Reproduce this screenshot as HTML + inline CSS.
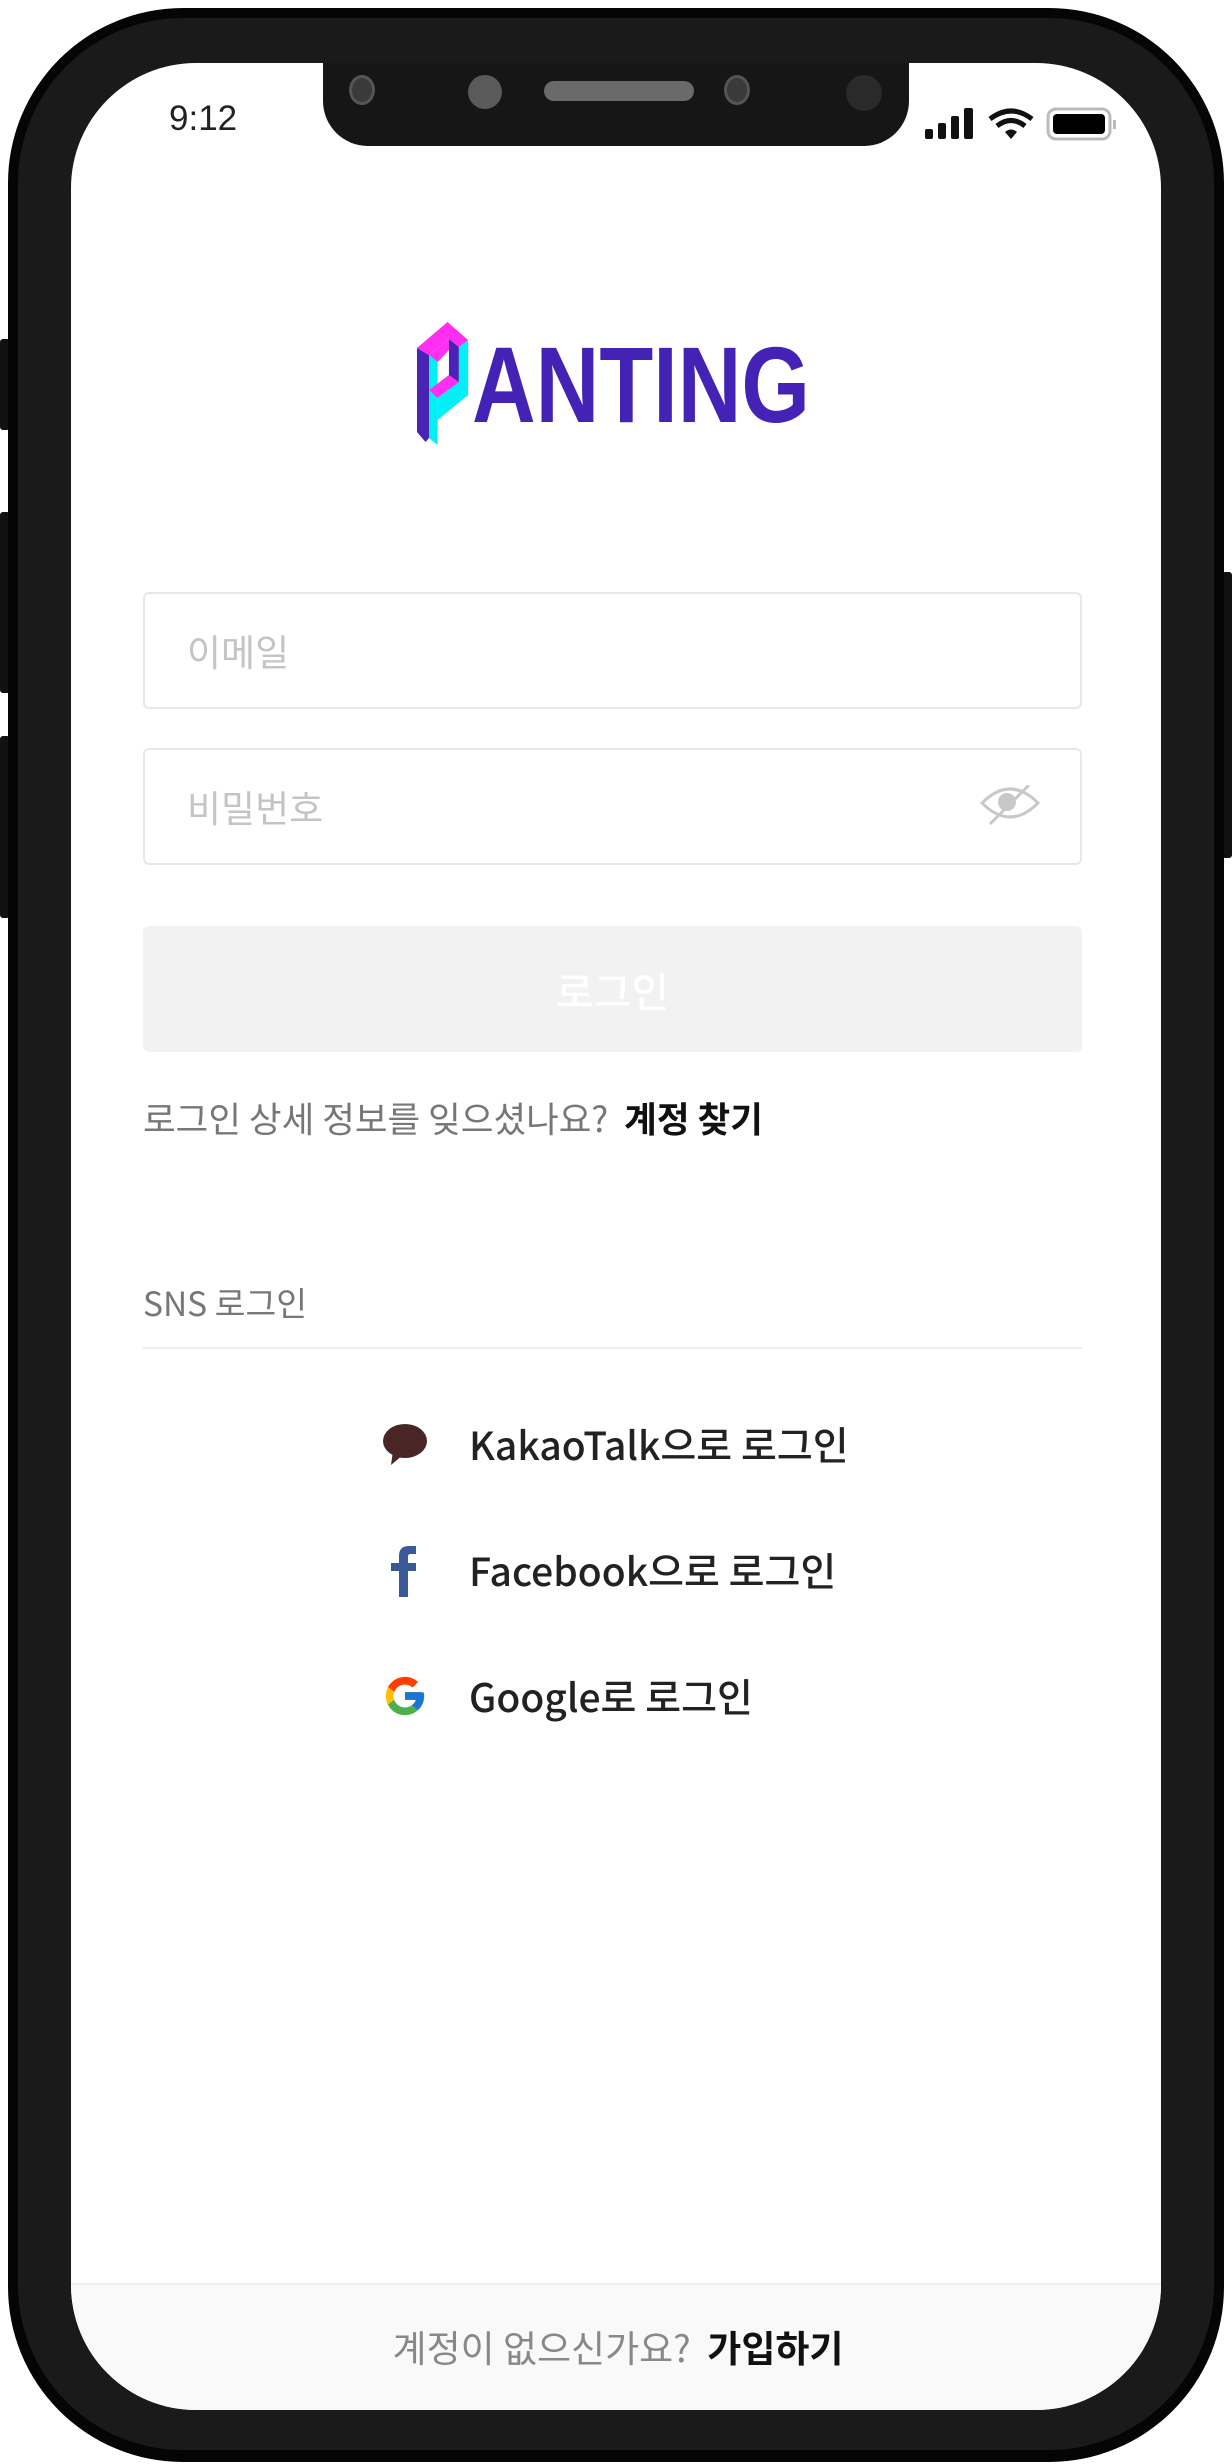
<!DOCTYPE html>
<html><head><meta charset="utf-8">
<style>
*{margin:0;padding:0;box-sizing:border-box}
html,body{width:1232px;height:2464px;background:#fff;overflow:hidden;font-family:"Noto Sans CJK KR","Liberation Sans",sans-serif}
.abs{position:absolute}
.phone{left:8px;top:8px;width:1216px;height:2454px;background:#050505;border-radius:175px}
.phone2{left:18px;top:18px;width:1196px;height:2432px;background:#1a1a1a;border-radius:165px}
.screen{left:71px;top:63px;width:1090px;height:2347px;background:#fff;border-radius:125px;overflow:hidden}
.btn{background:#111;border-radius:3px}
.input{position:absolute;left:72px;width:939px;height:117px;border:2px solid #e8e8e8;border-radius:6px}
.ph{position:absolute;left:42px;top:0;line-height:113px;font-size:37px;color:#c4c4c4}
.sns{position:absolute;left:398px;font-size:39px;color:#222;font-weight:500;line-height:50px;white-space:nowrap}
</style></head><body>
<div class="abs btn" style="left:0;top:339px;width:10px;height:91px"></div>
<div class="abs btn" style="left:0;top:512px;width:10px;height:181px"></div>
<div class="abs btn" style="left:0;top:736px;width:10px;height:182px"></div>
<div class="abs btn" style="left:1222px;top:572px;width:10px;height:286px"></div>
<div class="abs phone"></div>
<div class="abs phone2"></div>
<div class="abs screen">
  <div class="abs" style="left:98px;top:36px;font-size:35px;color:#222;font-family:'Liberation Sans',sans-serif">9:12</div>
  <svg class="abs" style="left:854px;top:44px" width="200" height="36" viewBox="0 0 200 36">
    <rect x="0" y="22" width="8" height="10" rx="2" fill="#111"/>
    <rect x="13" y="16" width="8" height="16" rx="2" fill="#111"/>
    <rect x="26" y="9" width="8" height="23" rx="2" fill="#111"/>
    <rect x="39" y="1" width="9" height="31" rx="2" fill="#111"/>
    <path d="M65 12 Q86 -4 107 12" stroke="#111" stroke-width="5" fill="none"/>
    <path d="M72 19 Q86 8 100 19" stroke="#111" stroke-width="5" fill="none"/>
    <path d="M80 25 L86 32 L92 25 Q86 20 80 25Z" fill="#111"/>
    <rect x="123" y="2" width="62" height="30" rx="8" fill="#fff" stroke="#bbb" stroke-width="3"/>
    <rect x="128" y="7" width="52" height="20" rx="4" fill="#000"/>
    <rect x="188" y="13" width="3" height="9" fill="#bbb"/>
  </svg>
  <div class="abs" style="left:252px;top:-30px;width:586px;height:113px;background:#161616;border-radius:0 0 45px 45px"></div>
  <div class="abs" style="left:278px;top:12px;width:26px;height:30px;border-radius:50%;background:#3a3a3a;border:3px solid #555"></div>
  <div class="abs" style="left:397px;top:12px;width:34px;height:34px;border-radius:50%;background:#5a5a5a"></div>
  <div class="abs" style="left:473px;top:18px;width:150px;height:20px;border-radius:10px;background:#6a6a6a"></div>
  <div class="abs" style="left:653px;top:12px;width:26px;height:30px;border-radius:50%;background:#3a3a3a;border:3px solid #555"></div>
  <div class="abs" style="left:775px;top:12px;width:36px;height:36px;border-radius:50%;background:#2a2a2a"></div>
  <svg class="abs" style="left:346px;top:259px" width="400" height="124" viewBox="417 322 400 124">
    <g transform="translate(417,0) scale(0.71,1) translate(-418,0)">
    <polygon points="418,348 435,355 435,438 430,442 418,432" fill="#4a22b5"/>
    <polygon points="435,355 447,362 447,445 435,438" fill="#00f0f5"/>
    <polygon points="418,348 461,322 490,340 477,347 463,339 435,355" fill="#ff2ef0"/>
    <polygon points="435,355 463,339 463,350 447,362" fill="#ff2ef0"/>
    <polygon points="463,339 477,347 477,382 463,390" fill="#4a22b5"/>
    <polygon points="477,347 490,340 490,395 477,402" fill="#00f0f5"/>
    <polygon points="435,390 463,375 477,382 447,398" fill="#ff2ef0"/>
    <polygon points="447,398 477,382 490,395 447,420" fill="#00f0f5"/>
    </g>
    <text x="472" y="422" font-family="Liberation Sans" font-weight="bold" font-size="108" fill="#4522b6" textLength="338" lengthAdjust="spacingAndGlyphs">ANTING</text>
  </svg>
  <div class="input" style="top:529px"><div class="ph">이메일</div></div>
  <div class="input" style="top:685px"><div class="ph">비밀번호</div>
    <svg class="abs" style="left:834px;top:35px" width="64" height="42" viewBox="976 785 64 42">
      <path d="M979 803 Q1007 775 1035 803 Q1007 831 979 803Z" fill="none" stroke="#c8c8c8" stroke-width="3"/>
      <circle cx="1004" cy="802" r="9" fill="#c8c8c8"/>
      <line x1="1026" y1="785" x2="987" y2="824" stroke="#c8c8c8" stroke-width="3"/>
    </svg>
  </div>
  <div class="abs" style="left:72px;top:863px;width:939px;height:126px;background:#f2f2f2;border-radius:6px;color:#fff;font-size:41px;text-align:center;line-height:126px;font-weight:500">로그인</div>
  <div class="abs" style="left:72px;top:1030px;font-size:35.5px;color:#777;line-height:50px;white-space:nowrap">로그인 상세 정보를 잊으셨나요?&nbsp; <span style="color:#111;font-weight:bold">계정 찾기</span></div>
  <div class="abs" style="left:72px;top:1214px;font-size:33.5px;color:#777;line-height:50px">SNS 로그인</div>
  <div class="abs" style="left:72px;top:1284px;width:939px;height:2px;background:#eee"></div>
  <svg class="abs" style="left:310px;top:1358px" width="48" height="48" viewBox="0 0 48 48">
    <ellipse cx="24" cy="20" rx="22" ry="17" fill="#4a2525"/>
    <path d="M12 30 L10 44 L22 34Z" fill="#4a2525"/>
  </svg>
  <div class="sns" style="top:1356px">KakaoTalk으로 로그인</div>
  <svg class="abs" style="left:318px;top:1482px" width="32" height="52" viewBox="0 0 32 52">
    <path d="M10 52 V26 H2 V18 H10 V11 Q10 1 20 1 H27 V9 H21 Q19 9 19 12 V18 H27 V26 H19 V52Z" fill="#3b5998"/>
  </svg>
  <div class="sns" style="top:1482px">Facebook으로 로그인</div>
  <svg class="abs" style="left:311px;top:1610px" width="46" height="46" viewBox="0 0 48 48">
    <path d="M43.6 20.5H42V20H24v8h11.3C33.7 32.7 29.200 36 24 36c-6.6 0-12-5.4-12-12s5.4-12 12-12c3.1 0 5.8 1.2 7.9 3.1l5.7-5.7C34 6.1 29.3 4 24 4 13 4 4 13 4 24s9 20 20 20 20-9 20-20c0-1.3-.1-2.4-.4-3.5z" fill="#FFC107"/>
    <path d="M6.3 14.7l6.6 4.8C14.7 15.1 19 12 24 12c3.1 0 5.8 1.2 7.9 3.1l5.7-5.7C34 6.1 29.3 4 24 4 16.3 4 9.7 8.3 6.3 14.7z" fill="#FF3D00"/>
    <path d="M24 44c5.2 0 9.9-2 13.4-5.2l-6.2-5.2C29.2 35.1 26.7 36 24 36c-5.2 0-9.6-3.3-11.3-8l-6.5 5C9.5 39.6 16.2 44 24 44z" fill="#4CAF50"/>
    <path d="M43.6 20.5H42V20H24v8h11.3c-.8 2.2-2.2 4.2-4.1 5.6l6.2 5.2C37 39.2 44 34 44 24c0-1.3-.1-2.4-.4-3.5z" fill="#1976D2"/>
  </svg>
  <div class="sns" style="top:1608px">Google로 로그인</div>
  <div class="abs" style="left:0;top:2220px;width:1090px;height:140px;background:#f9f9f9;border-top:2px solid #eee"></div>
  <div class="abs" style="left:0;top:2258px;width:1090px;text-align:center;font-size:37px;color:#888;line-height:50px;padding-left:4px;white-space:nowrap">계정이 없으신가요?&nbsp; <span style="color:#111;font-weight:bold">가입하기</span></div>
</div>
</body></html>
